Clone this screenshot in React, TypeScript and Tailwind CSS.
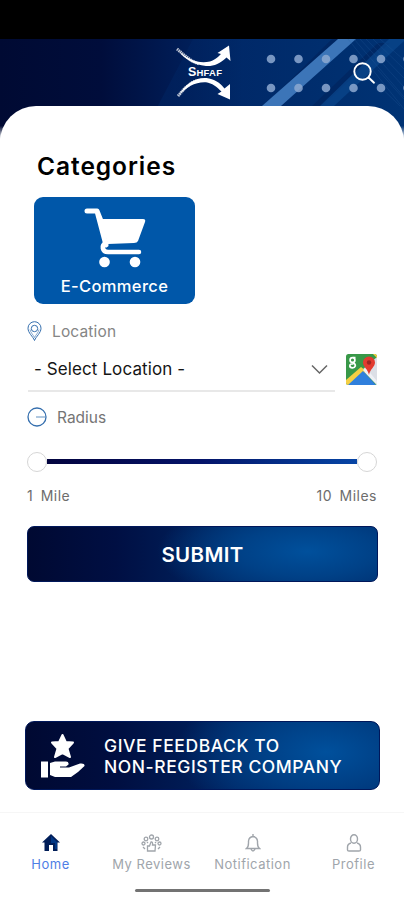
import React from "react";

function HeaderArt() {
  return (
    <svg className="absolute inset-x-0 top-[39px] h-[101px] w-full" viewBox="0 0 404 101" preserveAspectRatio="none">
      <defs>
        <linearGradient id="sky" x1="0" y1="0" x2="1" y2="0">
          <stop offset="0" stopColor="#000a33" />
          <stop offset="0.25" stopColor="#000d3b" />
          <stop offset="0.42" stopColor="#001a52" />
          <stop offset="0.6" stopColor="#002968" />
          <stop offset="1" stopColor="#003374" />
        </linearGradient>
        <linearGradient id="glow" x1="0" y1="0" x2="1" y2="0">
          <stop offset="0" stopColor="#002766" stopOpacity="0.5" />
          <stop offset="1" stopColor="#002b6f" stopOpacity="0" />
        </linearGradient>
        <linearGradient id="fade" x1="0" y1="0" x2="0" y2="1">
          <stop offset="0.86" stopColor="#fff" stopOpacity="0" />
          <stop offset="0.99" stopColor="#fff" />
        </linearGradient>
      </defs>
      <rect width="404" height="101" fill="url(#sky)" />
      <path d="M193 0H290V101H140Z" fill="url(#glow)" />
      <path d="M332 0 250 81 273 75 350 0Z" fill="#001f57" opacity=".5" />
      <path d="M378 4 312 67H322L390 4Z" fill="#001f57" opacity=".5" />
      <path d="M338 0H356L281 67H262Z" fill="#3c75b8" />
      <path d="M389 0H404V2L334 67H320Z" fill="#0a478d" opacity=".7" />
      <g stroke="#2a609f" strokeWidth=".7" opacity=".35">
        <path d="M348 0 404 70M354 0 404 58M360 0 404 48M366 0 404 39M373 0 404 30M380 0 404 21M369 37 400 67M378 31 404 60" />
      </g>
      <g fill="#8da9d1" opacity=".85">
        {[271, 298.5, 326, 353.5, 381].map((x) => (
          <React.Fragment key={x}>
            <circle cx={x} cy="20" r="4.3" />
            <circle cx={x} cy="49" r="4.3" />
          </React.Fragment>
        ))}
        <circle cx="407.500" cy="20" r="4.3" />
        <circle cx="407.500" cy="49" r="4.3" />
      </g>
      <rect width="404" height="101" fill="url(#fade)" />
    </svg>
  );
}

function Logo() {
  return (
    <div className="relative h-[56px] w-[56px]">
      <svg className="absolute inset-0" width="56" height="56" viewBox="0 0 56 56" fill="#fff">
        <path d="M3 7C12 16 23 20 34 17.500C40 15.500 43 12 45 10L41.500 9L53 1.500L54.500 17L50.500 13.500C44 20 37 22.500 30 22C18 21 7 14 3 7Z" />
        <path d="M3 51C9 40 21 32 33 34.500C41 36 46 41 48.500 44.500L54 40L54 55.500L41.500 50L45.500 47.500C41 43 36 39 30 38.200C20 37.500 10 43 3 51Z" />
        <path d="M1 5 8 11 16 17 23 20M2 52 9 44 17 38 23 36" fill="none" stroke="#fff" strokeWidth="3" strokeDasharray="1.5 .6" opacity=".75" />
      </svg>
      <span className="absolute left-[12px] top-[21px] whitespace-nowrap font-['Liberation_Sans',sans-serif] text-[12.5px] font-bold leading-[14px] tracking-[0.2px] text-white">
        S<span className="text-[9.5px]">HFAF</span>
      </span>
    </div>
  );
}

function MapTile() {
  return (
    <svg width="31" height="31" viewBox="0 0 31 31" className="ml-[12px] shrink-0">
      <defs>
        <clipPath id="tile"><rect width="31" height="31" rx="2.5" /></clipPath>
      </defs>
      <g clipPath="url(#tile)">
        <rect width="31" height="31" fill="#389848" />
        <path d="M31 3V31L16 16Z" fill="#dcdfe6" />
        <path d="M0 31V26L15 13 20 17 4 31Z" fill="#f5cf43" />
        <path d="M27 0H31V4Z" fill="#f5cf43" />
        <path d="M2 31 17 17 30 31Z" fill="#2f7fdc" />
        <path d="M17 16 20 14 31 27V31Z" fill="#eef0f5" />
        <path d="M23 21C22 15 17 13 17 8.500A6 6 0 0 1 29 8.500C29 13 24 15 23 21Z" fill="#e23b30" />
        <circle cx="23" cy="8.500" r="2.200" fill="#9c2622" />
        <g fill="none" stroke="#fff" strokeWidth="1.700">
          <circle cx="6.500" cy="6" r="2.400" />
          <path d="M9.500 3.500H7M7 8.500C9 9.500 9.500 10.500 9.300 12C8.500 14.500 4 14.300 3.800 11.900C3.800 9.800 6 9.700 7.500 9.800" />
        </g>
      </g>
    </svg>
  );
}

function NavItem({ label, className, children }: { label: string; className: string; children: React.ReactNode }) {
  return (
    <div className={"flex w-[101px] flex-col items-center " + className}>
      <div className="flex h-5 items-center">{children}</div>
      <span className="mt-[3px] whitespace-nowrap text-[13px] leading-4 tracking-[0.5px]">{label}</span>
    </div>
  );
}

export default function App() {
  return (
    <div className="relative flex h-[900px] w-[404px] flex-col overflow-hidden bg-white font-['Inter',sans-serif]">
      <HeaderArt />
      <div className="h-[39px] shrink-0 bg-black" />
      <header className="relative flex h-[67px] shrink-0 items-start pl-[176px] pr-7 pt-[5px]">
        <Logo />
        <svg className="ml-auto mt-[17px]" width="24" height="24" viewBox="0 0 24 24" fill="none" stroke="#fff" strokeWidth="1.900" strokeLinecap="round">
          <circle cx="10.500" cy="10.500" r="8.200" />
          <path d="m16.500 16.500 5.500 5.200" />
        </svg>
      </header>

      <main className="relative flex h-[706px] shrink-0 flex-col rounded-t-[36px] bg-white px-[27px]">
        <h1 className="ml-[10px] mt-[44px] text-[24.5px] font-semibold leading-8 tracking-[0.95px] text-black">Categories</h1>

        <button className="ml-[7px] mt-[15px] flex h-[107px] w-[161px] flex-col items-center rounded-[9px] bg-[#0057a9] text-white">
          <svg className="mt-[10px]" width="62" height="62" viewBox="0 0 62 62" fill="#fff">
            <path d="M3 4H13L17 14M13 4 22 38" fill="none" stroke="#fff" strokeWidth="5" strokeLinecap="round" strokeLinejoin="round" />
            <path d="M16 12H59Q62 12 61 15L54 34Q53 36 50 36L24 37Z" />
            <path d="M22 36C17 38 18 45 24 45H55" fill="none" stroke="#fff" strokeWidth="4.500" strokeLinecap="round" />
            <circle cx="20.500" cy="55" r="5.300" />
            <circle cx="51" cy="55" r="5.300" />
          </svg>
          <span className="mt-[7px] text-[16.5px] font-medium leading-5 tracking-[0.35px]">E-Commerce</span>
        </button>

        <div className="mt-[17px] flex h-5 items-center text-[#858585]">
          <svg width="15" height="21" viewBox="0 0 15 21" fill="none" stroke="#356fae" strokeWidth="1">
            <path d="M7.500 19.500C6 15.500 1 12 1 7.200A6.500 6.500 0 0 1 14 7.200C14 12 9 15.500 7.500 19.500Z" />
            <circle cx="7.500" cy="7.500" r="3.200" />
            <path d="M7.500 16.500C6 13.500 3.500 11.500 3 8.500M7.500 16.500C9 13.500 11.500 11.500 12 8.500" strokeWidth=".6" />
          </svg>
          <span className="ml-[10px] mt-px text-[15.5px] tracking-[0.15px]">Location</span>
        </div>

        <div className="mt-3 flex h-[32px] items-center">
          <div className="flex h-full w-[309px] items-center pl-[7px] pr-[6px] text-[#151515]">
            <span className="text-[17px] leading-6 tracking-[0.1px]">- Select Location -</span>
            <svg className="ml-auto" width="17" height="11" viewBox="0 0 17 11" fill="none" stroke="#666" strokeWidth="1.500">
              <path d="M1 1.500 8.500 9 16 1.500" />
            </svg>
          </div>
          <MapTile />
        </div>
        <div className="ml-[1px] mt-[5px] h-[2px] w-[307px] bg-[#e8e8e8]" />

        <div className="mt-[15px] flex h-5 items-center text-[#757575]">
          <svg width="20" height="20" viewBox="0 0 20 20" fill="none" stroke="#356fae" strokeWidth="1.300">
            <circle cx="10" cy="10" r="9" />
            <path d="M9 10H18" stroke="#86aad0" />
          </svg>
          <span className="ml-[10px] mt-px text-[15.5px]">Radius</span>
        </div>

        <div className="mt-6 flex h-[21px] items-center">
          <div className="z-10 size-5 shrink-0 rounded-full border border-[#d6d6d6] bg-white" />
          <div className="h-[5px] flex-1 bg-linear-to-r from-[#03043f] via-[#04146a] to-[#0745a5]" />
          <div className="z-10 size-5 shrink-0 rounded-full border border-[#d6d6d6] bg-white" />
        </div>

        <div className="mt-[13px] flex h-5 items-center justify-between text-[14px] text-[#6d6d6d]">
          <span className="tracking-[0.5px] [word-spacing:3px]">1 Mile</span>
          <span className="tracking-[0.5px] [word-spacing:3px]">10 Miles</span>
        </div>

        <button className="mt-[21px] flex h-[56px] w-[351px] items-center justify-center rounded-[7px] border border-[#00175a] bg-[radial-gradient(ellipse_150px_56px_at_80%_45%,#00509c_0%,#004187_45%,transparent_100%),linear-gradient(90deg,#000932_0%,#000f43_25%,#002764_60%,#002968_100%)] pt-[2px] text-[20.5px] font-semibold tracking-[0.35px] text-white">
          SUBMIT
        </button>

        <button className="-ml-[2px] mt-[139px] flex h-[69px] w-[355px] shrink-0 items-center rounded-[9px] border border-[#00175a] bg-[radial-gradient(ellipse_150px_75px_at_85%_45%,#00509c_0%,#003d82_50%,transparent_100%),linear-gradient(90deg,#000932_0%,#000e40_25%,#002462_60%,#002968_100%)] text-left text-white">
          <svg className="ml-[14px]" width="46" height="48" viewBox="0 0 46 48" fill="#fff">
            <path d="M22.500 3 25.800 10 33 10.500 27.500 16.500 30 25 22.500 21 15 25 17.500 16.500 12 10.500 19.200 10Z" stroke="#fff" strokeWidth="2" strokeLinejoin="round" />
            <rect x="1" y="29.500" width="7" height="16" />
            <path d="M10 31 15 29.500H26Q29 29.500 28.500 32.500L26 34.500H20V35.500H29L40 31.500Q45 31 44.500 34L38 40 31 45H15L10 43Z" />
          </svg>
          <span className="ml-[18px] mt-px whitespace-nowrap text-[17.5px] font-medium leading-[21px] tracking-[0.57px]">
            GIVE FEEDBACK TO<br />NON-REGISTER COMPANY
          </span>
        </button>
      </main>

      <nav className="flex h-[77px] shrink-0 items-start border-t border-[#f6f6f6] pt-5 text-[#a0a5ab]">
        <NavItem className="text-[#4e7ee6]" label="Home">
          <svg width="18" height="18" viewBox="0 0 18 18" fill="#001d58">
            <path d="M9 0 18 8.500H15.500V17H11V11H7V17H2.500V8.500H0Z" />
            <path d="M9 2 15 8V15H13V9H9Z" fill="#003785" />
          </svg>
        </NavItem>
        <NavItem className="" label="My Reviews">
          <svg width="21" height="19" viewBox="0 0 21 19" fill="none" stroke="currentColor" strokeWidth="1.300">
            <circle cx="10.500" cy="3" r="2" />
            <circle cx="5" cy="5" r="1.800" />
            <circle cx="16" cy="5" r="1.800" />
            <circle cx="2.500" cy="9.500" r="1.500" />
            <circle cx="18.500" cy="9.500" r="1.500" />
            <path d="M2 13 4 15M19 13 17 15M6 8 7 9M15 8 14 9M6.500 12H8.500L10 8Q12 7.500 11.500 11H14.500L14 17H6.500Z" />
          </svg>
        </NavItem>
        <NavItem className="" label="Notification">
          <svg width="16" height="18" viewBox="0 0 16 18" fill="none" stroke="currentColor" strokeWidth="1.400">
            <path d="M1.500 14.500Q3.500 13 3.500 9V7Q4 3 8 2.500Q12 3 12.500 7V9Q12.500 13 14.500 14.500ZM6 15Q8 19 10 15M8 0V2" />
          </svg>
        </NavItem>
        <NavItem className="" label="Profile">
          <svg width="16" height="18" viewBox="0 0 16 18" fill="none" stroke="currentColor" strokeWidth="1.400">
            <ellipse cx="8" cy="5" rx="3.500" ry="4.200" />
            <path d="M5 9Q1.500 10 1.500 13V16Q1.500 17 3 17H13Q14.500 17 14.500 16V13Q14.500 10 11 9" />
          </svg>
        </NavItem>
      </nav>
      <div className="ml-[135px] h-[3px] w-[135px] shrink-0 rounded-full bg-[#737373]" />
    </div>
  );
}
